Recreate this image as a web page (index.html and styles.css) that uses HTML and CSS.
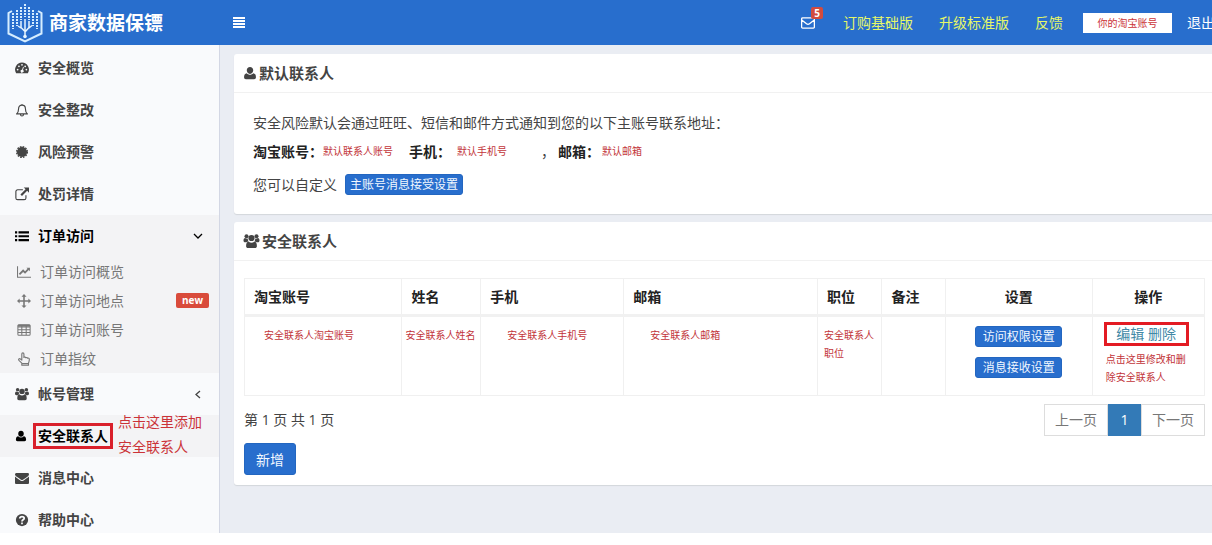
FILE: index.html
```html
<!DOCTYPE html>
<html lang="zh-CN">
<head>
<meta charset="utf-8">
<title>商家数据保镖</title>
<link rel="stylesheet" href="styles.css">
</head>
<body>
<svg class="sprite" aria-hidden="true">
  <symbol id="user" viewBox="0 0 16 16"><path d="M8 1c2.200 0 3.700 1.700 3.700 3.900S10.200 9 8 9 4.300 7.100 4.300 4.900 5.800 1 8 1zM4.300 8.200C5.300 9.300 6.500 9.900 8 9.900s2.700-.6 3.700-1.700c2.200.2 3.100 2.100 3.100 4.600 0 1.300-.8 2.200-2.100 2.200H3.300c-1.300 0-2.100-.9-2.100-2.200 0-2.500.9-4.400 3.100-4.600z"/></symbol>
  <symbol id="users" viewBox="0 0 16 16"><circle cx="3" cy="3.200" r="2"/><circle cx="13" cy="3.200" r="2"/><circle cx="8" cy="5" r="3.100"/><path d="M0 7.800C0 6 .6 5 1.600 5c1 .7 1.900.9 2.700.6-.1 1 .2 2 .8 2.800-.9 0-1.600.3-2.100.9H1.600C.6 9.300 0 8.700 0 7.800zM16 7.800C16 6 15.400 5 14.400 5c-1 .7-1.900.9-2.700.6.1 1-.2 2-.8 2.800.9 0 1.600.3 2.100.9h1.400c1 0 1.600-.6 1.600-1.500zM2.600 13.200c0-2.600.6-4.500 2.600-4.500 1.700 1.300 3.900 1.300 5.600 0 2 0 2.600 1.900 2.600 4.500 0 1.200-.8 1.800-1.900 1.800h-7c-1.100 0-1.900-.6-1.900-1.800z"/></symbol>
  <symbol id="gauge" viewBox="0 0 16 16"><path fill-rule="evenodd" d="M1.300 14A8 8 0 0 1 8 1.800 8 8 0 0 1 14.700 14zM2 9.800a1 1 0 1 0 2 0 1 1 0 1 0-2 0zM3.500 6a1 1 0 1 0 2 0 1 1 0 1 0-2 0zM7 4.400a1 1 0 1 0 2 0 1 1 0 1 0-2 0zM10.600 6a1 1 0 1 0 2 0 1 1 0 1 0-2 0zM12 9.800a1 1 0 1 0 2 0 1 1 0 1 0-2 0zM9.200 6.500l-1.100 3.400a1.700 1.700 0 1 0 1 .3l1-3.400z"/></symbol>
  <symbol id="bell" viewBox="0 0 16 16"><path fill="none" stroke="currentColor" stroke-width="1.300" stroke-linejoin="round" d="M8 1v1.400M1.800 12.500c1.900-1.500 2.300-3.300 2.300-5.900C4.100 4 5.500 2.500 8 2.500s3.900 1.500 3.900 4.100c0 2.600.4 4.400 2.300 5.900zM6.300 13c0 1.100.7 1.800 1.700 1.800s1.700-.7 1.700-1.800"/></symbol>
  <symbol id="burst" viewBox="0 0 16 16"><circle cx="8" cy="8" r="5.800"/><circle cx="8" cy="8" r="6.100" fill="none" stroke="currentColor" stroke-width="1.600" stroke-dasharray="1.900 1.290"/></symbol>
  <symbol id="external" viewBox="0 0 16 16"><path fill="none" stroke="currentColor" stroke-width="1.300" d="M9 3.200H3A2 2 0 0 0 1 5.200V12.500a2 2 0 0 0 2 2h7.500a2 2 0 0 0 2-2V9.500"/><path d="M10 .5h6v6l-2.100-2.100L8 10.300 6.200 8.500l5.900-5.900z"/></symbol>
  <symbol id="list" viewBox="0 0 16 16"><path d="M0 2.500h2.500V5H0zM4 2.500h12V5H4zM0 7h2.500v2.500H0zM4 7h12v2.500H4zM0 11.500h2.500V14H0zM4 11.500h12V14H4z"/></symbol>
  <symbol id="chart" viewBox="0 0 16 16"><path d="M0 1.500h1.200v12H16v1.200H0zM14.800 3v4l-1.300-1.300-4.300 4.400-2.200-2.200L3.500 11.400 2 9.900l5-5 2.200 2.200L12 4.200 10.800 3z"/></symbol>
  <symbol id="arrows" viewBox="0 0 16 16"><path d="M8 0l2.900 3H8.900v4.100H13V5.100L16 8l-3 2.900V8.900H8.900V13h2L8 16l-2.900-3h2V8.900H3v2L0 8l3-2.900v2h4.100V3h-2z"/></symbol>
  <symbol id="table" viewBox="0 0 16 16"><path fill="none" stroke="currentColor" stroke-width="1.200" d="M2.200 2h11.600c.8 0 1.200.5 1.200 1.200v9.600c0 .7-.4 1.200-1.200 1.200H2.200C1.400 14 1 13.500 1 12.800V3.200C1 2.500 1.400 2 2.200 2zM1 4.500h14M1 7.700h14M1 10.900h14M5.500 3v11M10.500 3v11"/><path d="M1 2h14v2.200H1z"/></symbol>
  <symbol id="pointer" viewBox="0 0 16 16"><path fill="none" stroke="currentColor" stroke-width="1.300" stroke-linejoin="round" d="M5.500 15v-2.200L2.200 9.600C1.200 8.300 2.500 7 3.900 8l1.600 1.200V2.400c0-1.900 2.400-1.900 2.400 0v3.900c.3-.8 1.900-.7 2.100.3.500-.5 1.700-.4 2 .5.900-.5 2.100 0 2.100 1.100 0 2.200-.4 3.300-1 4.700V15zM5.800 13.200h7.300"/></symbol>
  <symbol id="mail" viewBox="0 0 1792 1792"><path d="M1792 710v794q0 66-47 113t-113 47h-1472q-66 0-113-47t-47-113v-794q44 49 101 87 362 246 497 345 57 42 92.500 65.500t94.500 48 110 24.500h2q51 0 110-24.500t94.500-48 92.500-65.500q170-123 498-345 57-39 100-87zm0-294q0 79-49 151t-122 123q-376 261-468 325-10 7-42.500 31t-54 38.500-52 32.500-57.500 27-50 9h-2q-23 0-50-9t-57.500-27-52-32.500-54-38.500-42.500-31q-91-64-262-182.500t-205-142.500q-62-42-117-115.500t-55-136.500q0-78 41.500-130t118.500-52h1472q65 0 112.500 47t47.500 113z"/></symbol>
  <symbol id="mail-open" viewBox="0 0 16 16"><path fill="none" stroke="currentColor" stroke-width="1.500" stroke-linejoin="round" d="M1.800 2.200h12.400c.7 0 1.100.4 1.100 1.100v9.400c0 .7-.4 1.100-1.100 1.100H1.800c-.7 0-1.100-.4-1.100-1.100V3.300c0-.7.4-1.100 1.100-1.100zM.8 4.500l5.500 4.400c1.300 1 2.100 1 3.400 0l5.500-4.400"/></symbol>
  <symbol id="help" viewBox="0 0 16 16"><circle cx="8" cy="8" r="7"/><path fill="none" stroke="#f9fafc" stroke-width="2" d="M5.400 6.300C5.600 4.700 6.700 4 8 4c1.500 0 2.500.9 2.500 2.100C10.500 7.900 8 7.700 8 9.700M8 10.800v2"/></symbol>
  <symbol id="down" viewBox="0 0 10 10"><path fill="none" stroke="currentColor" stroke-width="1.300" d="M1 3l4 4 4-4"/></symbol>
  <symbol id="left" viewBox="0 0 10 10"><path fill="none" stroke="currentColor" stroke-width="1.300" d="M7 2L3 5.500 7 9"/></symbol>
</svg>

<div class="app">
  <header class="topbar">
    <div class="brand">
      <svg class="logo" viewBox="0 0 36 40" aria-hidden="true">
        <path class="logo-line" d="M5 8L1.500 10v20.500L18 38.500l16.500-8V10L31 8"/>
        <path class="logo-tree" d="M18 16v17M18 28.500l-4-4V18M14 25l-3-2M18 29l4-4.500V18M22 25l3-2.500"/>
        <circle cx="18" cy="33.500" r="1.800"/>
        <path class="logo-dots" d="M18 1v13M14 4v13M22 4v13M10 7v16M26 7v16M6 10v16M30 10v16"/>
      </svg>
      <span>商家数据保镖</span>
    </div>
    <button class="menu-toggle" type="button" aria-label="菜单"><svg viewBox="0 0 12 11"><path d="M0 0h12v2H0zM0 3h12v2H0zM0 6h12v2H0zM0 9h12v2H0z"/></svg></button>
    <nav class="toplinks">
      <a class="inbox" href="#" aria-label="消息"><svg class="icon"><use href="#mail-open"/></svg><span class="count">5</span></a>
      <a class="promo" href="#">订购基础版</a>
      <a class="promo" href="#">升级标准版</a>
      <a class="promo" href="#">反馈</a>
      <span class="account">你的淘宝账号</span>
      <a class="logout" href="#">退出</a>
    </nav>
  </header>

  <div class="columns">
    <nav class="sidebar">
      <a class="item" href="#"><svg class="icon"><use href="#gauge"/></svg>安全概览</a>
      <a class="item" href="#"><svg class="icon"><use href="#bell"/></svg>安全整改</a>
      <a class="item" href="#"><svg class="icon"><use href="#burst"/></svg>风险预警</a>
      <a class="item" href="#"><svg class="icon"><use href="#external"/></svg>处罚详情</a>
      <a class="item active" href="#"><svg class="icon"><use href="#list"/></svg>订单访问<svg class="arrow"><use href="#down"/></svg></a>
      <div class="submenu">
        <a href="#"><svg class="icon"><use href="#chart"/></svg>订单访问概览</a>
        <a href="#"><svg class="icon"><use href="#arrows"/></svg>订单访问地点<span class="new">new</span></a>
        <a href="#"><svg class="icon"><use href="#table"/></svg>订单访问账号</a>
        <a href="#"><svg class="icon"><use href="#pointer"/></svg>订单指纹</a>
      </div>
      <a class="item" href="#"><svg class="icon"><use href="#users"/></svg>帐号管理<svg class="arrow"><use href="#left"/></svg></a>
      <a class="item active" href="#"><svg class="icon person"><use href="#user"/></svg><span class="marked">安全联系人</span><span class="callout">点击这里添加<br>安全联系人</span></a>
      <a class="item" href="#"><svg class="icon"><use href="#mail"/></svg>消息中心</a>
      <a class="item" href="#"><svg class="icon"><use href="#help"/></svg>帮助中心</a>
    </nav>

    <main class="content">
      <section class="card">
        <h2><svg class="icon"><use href="#user"/></svg>默认联系人</h2>
        <div class="intro">
          <p>安全风险默认会通过旺旺、短信和邮件方式通知到您的以下主账号联系地址：</p>
          <p class="contact"><b>淘宝账号：</b><span class="note">默认联系人账号</span><b class="phone">手机：</b><span class="note phone-note">默认手机号</span><span class="comma">，</span><b>邮箱：</b><span class="note mail-note">默认邮箱</span></p>
          <div class="custom">您可以自定义<button class="btn small" type="button">主账号消息接受设置</button></div>
        </div>
      </section>

      <section class="card">
        <h2><svg class="icon wide"><use href="#users"/></svg>安全联系人</h2>
        <div class="contacts">
          <table>
            <colgroup><col class="c-account"><col class="c-name"><col class="c-phone"><col class="c-mail"><col class="c-job"><col class="c-remark"><col class="c-set"><col class="c-act"></colgroup>
            <thead><tr><th>淘宝账号</th><th>姓名</th><th>手机</th><th>邮箱</th><th>职位</th><th>备注</th><th class="mid">设置</th><th class="mid">操作</th></tr></thead>
            <tbody><tr>
              <td class="note inset">安全联系人淘宝账号</td>
              <td class="note tight">安全联系人姓名</td>
              <td class="note deep">安全联系人手机号</td>
              <td class="note deep">安全联系人邮箱</td>
              <td class="note snug">安全联系人职位</td>
              <td></td>
              <td><div class="stack"><button class="btn small" type="button">访问权限设置</button><button class="btn small" type="button">消息接收设置</button></div></td>
              <td><div class="actions"><div class="links"><a href="#">编辑</a> <a href="#">删除</a></div><p class="note">点击这里修改和删除安全联系人</p></div></td>
            </tr></tbody>
          </table>
          <div class="footer">
            <span>第 1 页 共 1 页</span>
            <nav class="pager"><a href="#">上一页</a><a class="current" href="#">1</a><a href="#">下一页</a></nav>
          </div>
          <button class="btn add" type="button">新增</button>
        </div>
      </section>
    </main>
  </div>
</div>
</body>
</html>
```

FILE: styles.css
```css
* { box-sizing: border-box; }
body {
  margin: 0;
  overflow: hidden;
  background: #fff;
  color: #444;
  font: 14px/20px "Open Sans", "Noto Sans CJK SC", sans-serif;
}
a { color: inherit; text-decoration: none; }
p, h2 { margin: 0; }
button { font-family: inherit; cursor: pointer; }
.sprite { position: absolute; width: 0; height: 0; }
.icon { width: 14px; height: 14px; fill: currentColor; flex: none; }

/* The shell runs slightly past the right edge and is clipped there. */
.app {
  display: flex;
  flex-direction: column;
  height: calc(100vh - 12px);
  margin-right: -4px;
  overflow: hidden;
}

.topbar {
  display: flex;
  align-items: center;
  flex: none;
  height: 45px;
  background: #286ecd;
  color: #fff;
}
.brand {
  display: flex;
  align-items: center;
  gap: 6px;
  width: 233px;
  padding-left: 7px;
  font-size: 19px;
  font-weight: 700;
}
.logo { width: 36px; height: 40px; fill: #e6f5ff; }
.logo-line { fill: none; stroke: #d5edff; stroke-width: 2; }
.logo-tree { fill: none; stroke: #e6f5ff; stroke-width: 1.5; }
.logo-dots { fill: none; stroke: #d5edff; stroke-width: 2; stroke-dasharray: 2 1; }
.menu-toggle { display: flex; padding: 0; border: 0; background: none; }
.menu-toggle svg { width: 12px; height: 11px; fill: #fff; }
.toplinks { display: flex; align-items: center; margin-left: auto; padding-right: 1px; white-space: nowrap; }
.inbox { position: relative; display: flex; margin-right: 28px; }
.count {
  position: absolute;
  left: 10px;
  top: -9px;
  width: 12px;
  border-radius: 2px;
  background: #d24b3e;
  font-size: 10px;
  font-weight: 700;
  line-height: 12px;
  text-align: center;
}
.promo { color: #e6f768; margin-right: 26px; }
.account {
  width: 89px;
  margin: 0 15px 0 -6px;
  background: #fff;
  color: #cb3338;
  font-size: 10px;
  text-align: center;
}

.columns { display: flex; flex: 1; min-height: 0; }
.sidebar {
  flex: none;
  width: 220px;
  padding-top: 2px;
  border-right: 1px solid #d3d7e4;
  background: #f9fafc;
}
.item {
  position: relative;
  display: flex;
  align-items: center;
  gap: 9px;
  height: 42px;
  padding: 0 16px 0 15px;
  color: #444;
  font-weight: 700;
}
.item.active { background: #f3f3f5; color: #000; }
.arrow { width: 10px; height: 10px; margin-left: auto; }
.submenu { background: #f3f3f5; color: #777; }
.submenu a { display: flex; align-items: center; gap: 9px; height: 29px; padding: 0 10px 0 17px; }
.new {
  margin-left: auto;
  padding: 0 6px;
  border-radius: 2px;
  background: #d94b3b;
  color: #fff;
  font-size: 10px;
  font-weight: 700;
  line-height: 15px;
}
.person { width: 12px; }
.marked { margin-left: -3px; padding: 0 2px; border: 3px solid #d9202b; white-space: nowrap; }
.callout {
  position: absolute;
  left: 118px;
  top: -6px;
  color: #cb3338;
  font-weight: 400;
  line-height: 25px;
  white-space: nowrap;
}

.content {
  display: flex;
  flex-direction: column;
  gap: 8px;
  flex: 1;
  min-width: 0;
  padding: 9px 0 0 14px;
  background: #eaedf3;
}
.card { border-radius: 3px; background: #fff; box-shadow: 0 1px 1px #d3d6db; }
.card h2 {
  display: flex;
  align-items: center;
  gap: 2px;
  height: 39px;
  padding-left: 9px;
  border-bottom: 1px solid #f1f1f1;
  font-size: 15px;
  font-weight: 700;
}
.icon.wide { width: 17px; height: 16px; }
.intro { padding: 15px 19px 19px; line-height: 29px; white-space: nowrap; }
.contact { display: flex; }
.contact b, th { color: #222; }
.note { color: #c23439; font-size: 10px; }
.phone { margin: 0 6px 0 16px; }
.phone-note { margin-right: 34px; }
.comma { margin-right: 3px; }
.mail-note { margin-left: 2px; }
.custom { display: flex; align-items: center; gap: 8px; margin-top: 8px; line-height: 20px; }
.btn {
  border: 1px solid #2366c0;
  border-radius: 3px;
  background: #286ecd;
  color: #f2f8ff;
}
.small { height: 21px; padding: 0 4px; font-size: 12px; line-height: 19px; }

.contacts { padding: 17px 11px 10px 10px; }
table { width: 100%; border-collapse: collapse; table-layout: fixed; }
th, td { border: 1px solid #f0f0f0; }
th { height: 37px; padding: 0 0 0 9px; border-bottom: 3px solid #f1f1f1; text-align: left; }
th.mid { padding: 0; text-align: center; }
td { height: 80px; padding: 9px 0 0; vertical-align: top; }
td.note { line-height: 18px; }
td.inset { padding-left: 19px; }
td.tight { padding-left: 3px; }
td.deep { padding-left: 26px; }
td.snug { padding: 9px 6px 0; }
.c-account { width: 16.4%; }
.c-name { width: 8.2%; }
.c-phone { width: 14.9%; }
.c-mail { width: 20.2%; }
.c-job { width: 6.7%; }
.c-remark { width: 6.6%; }
.c-set { width: 15.3%; }
.c-act { width: 11.7%; }
.stack { display: flex; flex-direction: column; align-items: center; gap: 10px; }
.stack .btn { width: 87px; }
.actions { width: 85px; margin: -4px auto 0 11px; }
.links {
  border: 3px solid #e31b23;
  color: #4289a6;
  line-height: 18px;
  text-align: center;
}
.actions p { padding: 4px 0 0 2px; line-height: 18px; }

.footer { display: flex; align-items: center; justify-content: space-between; padding: 8px 0 7px; }
.pager { display: flex; color: #777; text-align: center; line-height: 30px; }
.pager a { width: 64px; border: 1px solid #ddd; }
.pager .current { width: 33px; border-color: #337ab7; background: #337ab7; color: #fff; }
.add { width: 52px; height: 32px; padding: 0; font-size: 14px; }
```
